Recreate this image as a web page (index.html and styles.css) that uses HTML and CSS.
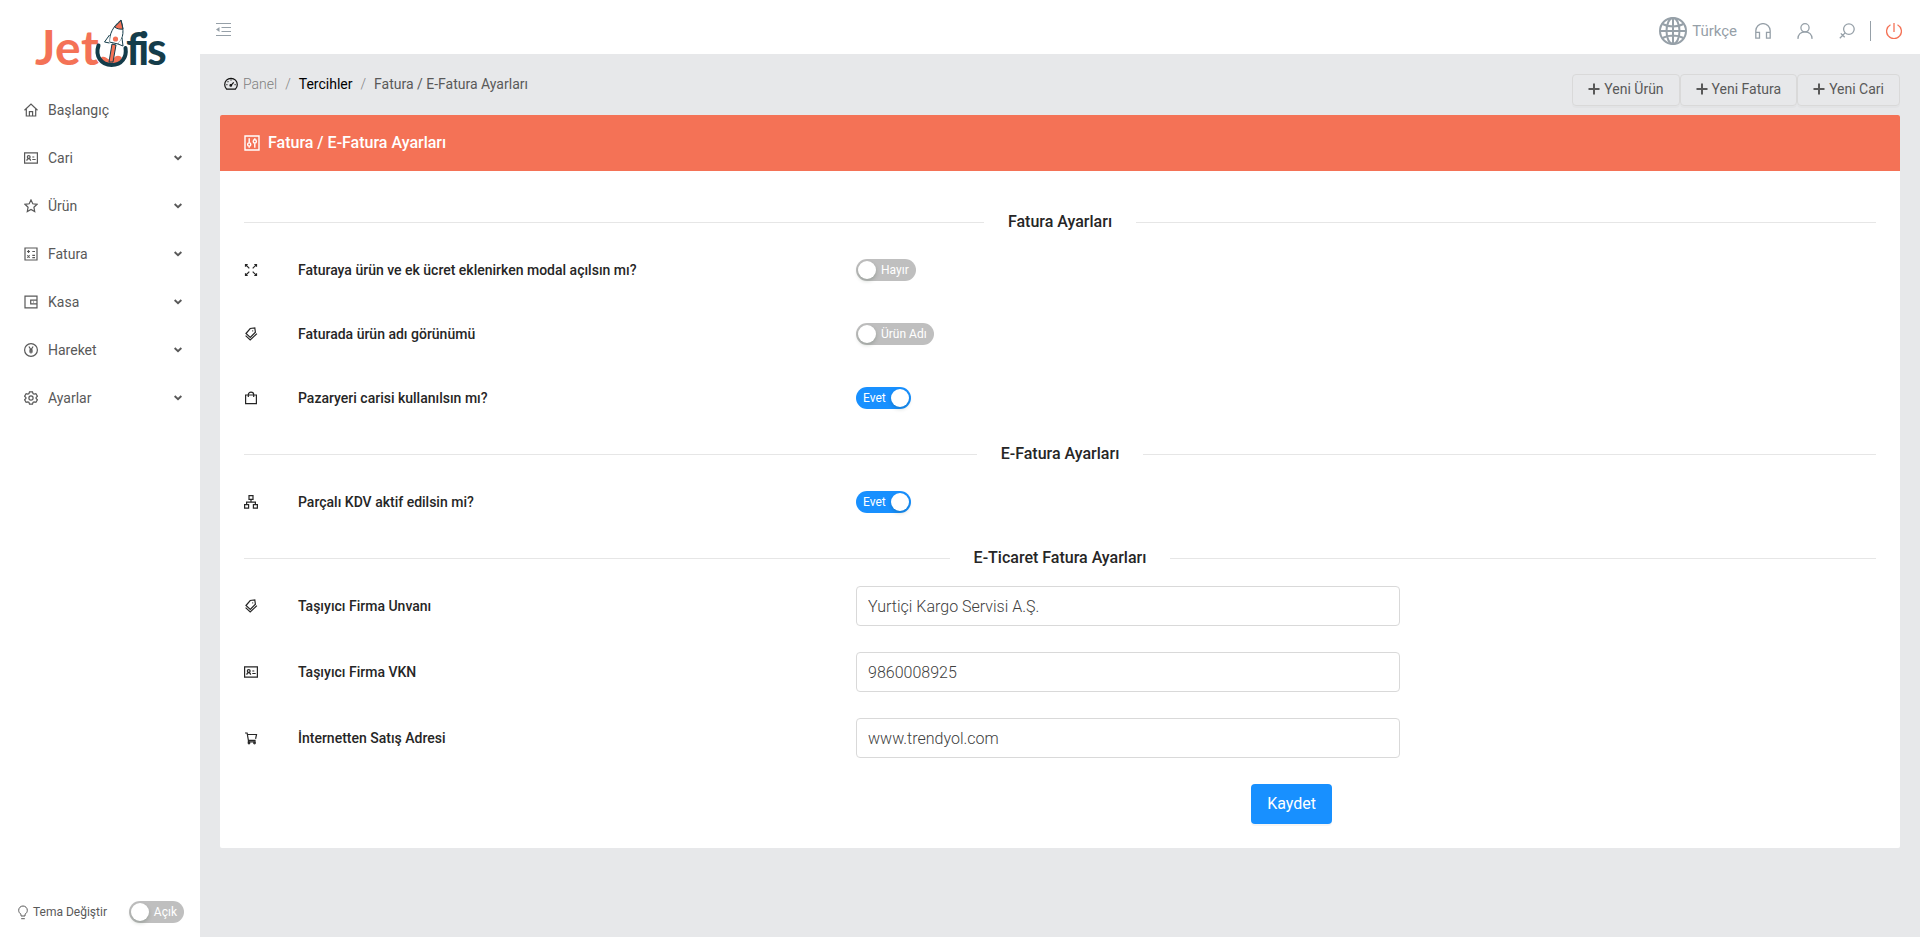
FILE: index.html
```html
<!DOCTYPE html>
<html lang="tr">
<head>
<meta charset="utf-8">
<title>Fatura / E-Fatura Ayarları</title>
<link rel="stylesheet" href="styles.css">
</head>
<body>
<svg class="sprite" aria-hidden="true">
  <symbol id="i-tags" viewBox="0 0 14 14"><path d="M2 6.500 6.200 1.500 10.800 1 11.400 5.200 6.300 10.400z"/><path d="M1.600 8.600 6.200 13 12.900 6.600M8.300 3.800h.9"/></symbol>
  <symbol id="i-card" viewBox="0 0 14 14"><path d="M.6 1.9h12.8v10.2H.6zM2.8 9.8c.1-1.5.8-2.2 1.9-2.2s1.8.7 1.9 2.2M8.300 6h2M8.300 8.500h3.400"/><circle cx="4.7" cy="6" r="1.4"/></symbol>
  <symbol id="i-down" viewBox="0 0 8 6"><path d="M.6 1 4 4.2 7.400 1"/></symbol>
  <symbol id="i-plus" viewBox="0 0 12 12"><path d="M6 .5v11M.5 6h11"/></symbol>
</svg>
<div class="app">
  <aside class="sidebar">
    <a class="logo" href="#" aria-label="Jetofis">
      <svg viewBox="0 -10 140 76" width="140" height="76">
        <g class="logo-text">
          <text class="logo-jet" font-size="48" x="0 20 46" y="47">Jet</text>
          <text class="logo-fis" font-size="45" x="91 103 112" y="47">fis</text>
        </g>
        <path class="logo-fire" d="M65 41c2-4 6-2 8 0l3 1 1 2 2-4c2-3 6-3 8 0l-3 5-7 2-7-2z"/>
        <path class="logo-ring" d="M63.500 27.500C60 38 66 47 76.500 47S92 39 90.500 30"/>
        <path class="logo-flame" d="m77 26 4 1-3 17h-4z"/>
        <path class="logo-body" d="M74.500 24c0-8 3-15 11.500-22 3 10 3 18-3 24z"/>
        <path class="logo-body" d="m74.500 17-5 7 5 1M87 20l1 8-5-2"/>
        <path class="logo-nose" d="M79.500 9 86 2.500l2 8.500c-2.500.5-6 0-8.500-2z"/>
        <circle class="logo-window" cx="80.500" cy="21" r="2.600"/>
      </svg>
    </a>
    <nav class="menu">
      <a class="menu-item" href="#"><svg class="icon" viewBox="0 0 14 14"><path d="M.5 7.200 7 1.100l6.500 6.100M2.300 6v7h9.400V6M5.400 13V8.600h3.200V13"/></svg><span>Başlangıç</span></a>
      <a class="menu-item" href="#"><svg class="icon"><use href="#i-card"/></svg><span>Cari</span><svg class="chevron"><use href="#i-down"/></svg></a>
      <a class="menu-item" href="#"><svg class="icon" viewBox="0 0 14 14"><path d="m7 .9 1.800 3.900 4.200.5-3.100 2.900.8 4.300L7 10.400l-3.700 2.100.8-4.300L1 5.300l4.200-.5z"/></svg><span>Ürün</span><svg class="chevron"><use href="#i-down"/></svg></a>
      <a class="menu-item" href="#"><svg class="icon" viewBox="0 0 14 14"><path d="M1 1h12v12H1zM3 4.500h3M4.500 3v3M8.300 4.500H11M3.300 8.300l2.400 2.400M5.700 8.300l-2.400 2.400M8.300 8.400H11M8.300 10.600H11"/></svg><span>Fatura</span><svg class="chevron"><use href="#i-down"/></svg></a>
      <a class="menu-item" href="#"><svg class="icon" viewBox="0 0 14 14"><path d="M13 5.200V1.100H1v11.800h12V8.800M13 5.200H6.700v3.600H13zM9 7h.9"/></svg><span>Kasa</span><svg class="chevron"><use href="#i-down"/></svg></a>
      <a class="menu-item" href="#"><svg class="icon" viewBox="0 0 14 14"><circle cx="7" cy="7" r="6.400"/><path d="m4.900 3.500 2.100 3.300 2.100-3.300M7 6.800v3.700M5.200 7.100h3.600M5.200 8.800h3.600"/></svg><span>Hareket</span><svg class="chevron"><use href="#i-down"/></svg></a>
      <a class="menu-item" href="#"><svg class="icon" viewBox="0 0 14 14"><path d="M5.500.8h3l.5 1.700 1.100.7 1.800-.5 1.500 2.500L12.100 6.500v1l1.300 1.300-1.500 2.500-1.800-.5-1.100.7-.5 1.700h-3L5 11.500l-1.100-.7-1.800.5L.6 8.800l1.300-1.300v-1L.6 5.200l1.500-2.500 1.800.5L5 2.500z"/><circle cx="7" cy="7" r="2.100"/></svg><span>Ayarlar</span><svg class="chevron"><use href="#i-down"/></svg></a>
    </nav>
    <div class="theme">
      <svg class="bulb" viewBox="0 0 10 15"><path d="M3 10.500V9.300C1.600 8.400.7 7 .7 5.300a4.300 4.300 0 0 1 8.600 0c0 1.700-.9 3.100-2.300 4v1.700H3zM3.200 13.700h3.600"/></svg>
      <span id="theme-label">Tema Değiştir</span>
      <button class="switch" type="button" role="switch" aria-checked="false" aria-labelledby="theme-label"><span class="switch-text">Açık</span></button>
    </div>
  </aside>

  <div class="page">
    <header class="topbar">
      <button class="icon-button fold" type="button" aria-label="Menüyü daralt"><svg viewBox="0 0 15 15" width="15" height="15"><path d="M0 1.500h15M5.500 5.500H15M5.500 9.500H15M0 13.500h15"/><path class="solid" d="M0 7.500 3.500 5v5z"/></svg></button>
      <div class="tools">
        <button class="icon-button language" type="button"><svg viewBox="0 0 28 28" width="28" height="28"><circle cx="14" cy="14" r="13"/><ellipse cx="14" cy="14" rx="6.500" ry="13"/><path d="M14 1v26M1 14h26M3.500 7c6 3.300 15 3.300 21 0M3.500 21c6-3.300 15-3.300 21 0"/></svg><span>Türkçe</span></button>
        <button class="icon-button" type="button" aria-label="Destek"><svg viewBox="0 0 16 16" width="16" height="16"><path d="M.8 15V7.800a7.200 7.200 0 0 1 14.400 0V15M.8 9.400h3.700v5.800H.8zM11.500 9.400h3.700v5.800h-3.700z"/></svg></button>
        <button class="icon-button" type="button" aria-label="Profil"><svg viewBox="0 0 16 16" width="16" height="16"><circle cx="8" cy="4.800" r="4.100"/><path d="M.9 15.900C1.200 11.500 4 8.900 8 8.900s6.800 2.600 7.100 7"/></svg></button>
        <button class="icon-button" type="button" aria-label="Şifre"><svg viewBox="0 0 16 16" width="16" height="16"><circle cx="9.900" cy="6.100" r="5.300"/><path d="M6.100 9.900.8 15.200M3.700 12.300l2 2M1.800 10.400l2.600 2.600"/></svg></button>
        <span class="separator"></span>
        <button class="icon-button power" type="button" aria-label="Çıkış"><svg viewBox="0 0 16 16" width="16" height="16"><path d="M4.500 1.700a7.400 7.400 0 1 0 7 0M8 0v9"/></svg></button>
      </div>
    </header>

    <main class="content">
      <div class="toolbar">
        <nav class="breadcrumb" aria-label="Konum">
          <a class="crumb-home" href="#"><svg class="icon" viewBox="0 0 14 14"><path d="M2.700 12.200a6.300 6.300 0 1 1 8.600 0zM7 8.300l2.700-3M7 2.600v1M2.400 7.700h1M10.600 7.700h1M3.600 4.300l.8.8"/><circle cx="6.800" cy="8.400" r=".8"/></svg><span>Panel</span></a>
          <span class="slash">/</span>
          <a class="crumb-link" href="#">Tercihler</a>
          <span class="slash">/</span>
          <span class="crumb-current">Fatura / E-Fatura Ayarları</span>
        </nav>
        <div class="actions">
          <button class="button" type="button"><svg class="plus"><use href="#i-plus"/></svg>Yeni Ürün</button>
          <button class="button" type="button"><svg class="plus"><use href="#i-plus"/></svg>Yeni Fatura</button>
          <button class="button" type="button"><svg class="plus"><use href="#i-plus"/></svg>Yeni Cari</button>
        </div>
      </div>

      <section class="card">
        <h1 class="card-head"><svg viewBox="0 0 16 16" width="16" height="16"><path d="M1 1h14v14H1zM5.200 3.200v4.600M5.200 11.200v1.600M10.800 3.200v1.600M10.800 8.200v4.600"/><circle cx="5.200" cy="9.500" r="1.600"/><circle cx="10.800" cy="6.400" r="1.600"/></svg><span>Fatura / E-Fatura Ayarları</span></h1>
        <form class="card-body">
          <h2 class="divider">Fatura Ayarları</h2>
          <div class="row">
            <div class="label"><svg class="icon" viewBox="0 0 14 14"><path d="M1.500 3.700V1.500h2.200M1.500 1.500l3.800 3.800M10.300 1.500h2.200v2.200M12.500 1.500 8.700 5.300M1.500 10.300v2.200h2.200M1.500 12.500l3.800-3.800M10.300 12.500h2.200v-2.200M12.500 12.500 8.700 8.700"/></svg><span id="l1">Faturaya ürün ve ek ücret eklenirken modal açılsın mı?</span></div>
            <div><button class="switch" type="button" role="switch" aria-checked="false" aria-labelledby="l1"><span class="switch-text">Hayır</span></button></div>
          </div>
          <div class="row">
            <div class="label"><svg class="icon"><use href="#i-tags"/></svg><span id="l2">Faturada ürün adı görünümü</span></div>
            <div><button class="switch" type="button" role="switch" aria-checked="false" aria-labelledby="l2"><span class="switch-text">Ürün Adı</span></button></div>
          </div>
          <div class="row">
            <div class="label"><svg class="icon" viewBox="0 0 14 14"><path d="M1.600 4h10.800v8.700H1.600zM4.300 6V3.800a2.700 2.700 0 0 1 5.400 0V6"/></svg><span id="l3">Pazaryeri carisi kullanılsın mı?</span></div>
            <div><button class="switch" type="button" role="switch" aria-checked="true" aria-labelledby="l3"><span class="switch-text">Evet</span></button></div>
          </div>
          <h2 class="divider">E-Fatura Ayarları</h2>
          <div class="row">
            <div class="label"><svg class="icon" viewBox="0 0 14 14"><path d="M5 .7h4v3.600H5zM.6 9.600h4v3.600h-4zM9.400 9.600h4v3.600h-4zM7 4.300v2.800M2.600 9.600V7.100h8.800v2.500"/></svg><span id="l4">Parçalı KDV aktif edilsin mi?</span></div>
            <div><button class="switch" type="button" role="switch" aria-checked="true" aria-labelledby="l4"><span class="switch-text">Evet</span></button></div>
          </div>
          <h2 class="divider">E-Ticaret Fatura Ayarları</h2>
          <div class="row field">
            <label class="label" for="carrier"><svg class="icon"><use href="#i-tags"/></svg><span>Taşıyıcı Firma Unvanı</span></label>
            <input class="input" id="carrier" type="text" value="Yurtiçi Kargo Servisi A.Ş.">
          </div>
          <div class="row field">
            <label class="label" for="vkn"><svg class="icon"><use href="#i-card"/></svg><span>Taşıyıcı Firma VKN</span></label>
            <input class="input" id="vkn" type="text" value="9860008925">
          </div>
          <div class="row field">
            <label class="label" for="site"><svg class="icon" viewBox="0 0 14 14"><path d="M1 2h2.100l1.300 7.400h7.200M3.400 3.500h9.100l-.9 4.400M4.400 9.400v1.400h7.300"/><circle cx="5" cy="12" r=".8"/><circle cx="10.500" cy="12" r=".8"/></svg><span>İnternetten Satış Adresi</span></label>
            <input class="input" id="site" type="text" value="www.trendyol.com">
          </div>
          <div class="row submit">
            <button class="save" type="submit">Kaydet</button>
          </div>
        </form>
      </section>
    </main>
  </div>
</div>
</body>
</html>
```
FILE: styles.css
```css
*,
*::before,
*::after {
  box-sizing: border-box;
}

body {
  margin: 0;
  font: 300 14px/22px Roboto, "Liberation Sans", sans-serif;
  color: #262626;
  background: #e7e8ea;
}

a {
  color: inherit;
  text-decoration: none;
}

button,
input {
  font: inherit;
  margin: 0;
}

button {
  cursor: pointer;
}

svg {
  display: block;
  flex: none;
  fill: none;
  stroke: currentColor;
}

.sprite {
  position: absolute;
  width: 0;
  height: 0;
}

.icon {
  width: 14px;
  height: 14px;
  stroke-width: 1.2;
}

.app {
  display: grid;
  grid-template-columns: 200px 1fr;
  min-height: 100vh;
}

/* Sidebar */
.sidebar {
  display: flex;
  flex-direction: column;
  background: #fff;
  color: #595959;
}

.logo {
  padding: 8px 25px 6px 35px;
}

.logo svg {
  stroke: none;
}

.logo-text {
  font-family: Lato, sans-serif;
  font-weight: 700;
}

.logo-jet,
.logo-fire,
.logo-nose,
.logo-window,
.logo-flame {
  fill: #f47256;
}

.logo-fis {
  fill: #143c4a;
}

.logo-ring {
  stroke: #143c4a;
  stroke-width: 4;
  stroke-linecap: round;
}

.logo-body {
  fill: #fff;
  stroke: #143c4a;
}

.logo-flame,
.logo-nose {
  stroke: #143c4a;
}

.menu {
  display: flex;
  flex-direction: column;
  gap: 8px;
}

.menu-item {
  display: flex;
  align-items: center;
  gap: 10px;
  height: 40px;
  padding: 0 18px 0 24px;
  font-weight: 400;
}

.chevron {
  width: 8px;
  height: 6px;
  margin-left: auto;
  stroke-width: 2;
}

.theme {
  display: flex;
  align-items: center;
  gap: 5px;
  margin-top: auto;
  padding: 0 16px 14px 18px;
  font-size: 12px;
  font-weight: 400;
}

.theme .switch {
  margin-left: auto;
}

.bulb {
  width: 10px;
  height: 15px;
}

/* Top bar */
.topbar {
  display: flex;
  align-items: center;
  justify-content: space-between;
  height: 54px;
  padding: 4px 18px 0 16px;
  background: #fff;
  color: #96a0a8;
}

.icon-button {
  display: flex;
  align-items: center;
  padding: 0;
  border: 0;
  background: none;
  color: inherit;
}

.solid {
  fill: currentColor;
  stroke: none;
}

.tools {
  display: flex;
  align-items: center;
  padding-top: 4px;
  stroke-width: 1.3;
}

.tools .icon-button {
  margin-left: 26px;
}

.tools .icon-button + .icon-button:nth-child(2) {
  margin-left: 18px;
}

.language {
  gap: 5px;
  font-size: 15px;
  font-weight: 400;
}

.language svg {
  stroke-width: 2;
}

.separator {
  width: 1px;
  height: 20px;
  margin-left: 15px;
  background: #96a0a8;
}

.tools .power {
  margin-left: 15px;
  color: #f47256;
}

/* Content */
.content {
  padding: 20px 20px 24px;
}

.toolbar {
  display: flex;
  align-items: flex-start;
  justify-content: space-between;
  padding: 0 0 9px 4px;
}

.breadcrumb {
  display: flex;
  align-items: center;
  line-height: 20px;
}

.crumb-home {
  display: flex;
  align-items: center;
  gap: 5px;
  color: #808080;
}

.crumb-home svg {
  color: #111;
}

.slash {
  margin: 0 8px;
  color: #808080;
}

.crumb-link {
  color: #000;
  font-weight: 400;
}

.crumb-current {
  color: #595959;
  font-weight: 400;
}

.actions {
  display: flex;
}

.button {
  display: flex;
  align-items: center;
  gap: 4px;
  height: 32px;
  padding: 0 15px 2px;
  border: 1px solid #d9d9d9;
  border-radius: 4px;
  background: transparent;
  box-shadow: 0 2px 0 rgba(0, 0, 0, 0.02);
  color: #595959;
  font-weight: 400;
}

.plus {
  width: 12px;
  height: 12px;
  stroke-width: 2;
}

.card {
  background: #fff;
  border-radius: 2px;
}

.card-head {
  display: flex;
  align-items: center;
  gap: 8px;
  height: 56px;
  margin: 0;
  padding: 0 24px;
  border-radius: 2px 2px 0 0;
  background: #f47256;
  color: #fff;
  font-size: 16px;
  font-weight: 500;
  stroke-width: 1.4;
}

.card-body {
  padding: 39px 24px 24px;
}

.divider {
  display: flex;
  align-items: center;
  gap: 24px;
  margin: 0 0 16px;
  font-size: 16px;
  line-height: 24px;
  font-weight: 500;
}

.divider::before,
.divider::after {
  content: "";
  flex: 1;
  height: 1px;
  background: #e6e6e6;
}

.row {
  display: grid;
  grid-template-columns: 9fr 8fr 7fr;
  align-items: center;
  height: 40px;
  margin-bottom: 24px;
}

.field {
  margin-bottom: 26px;
}

.label {
  display: grid;
  grid-template-columns: 54px 1fr;
  align-items: center;
  font-weight: 500;
}

.input {
  width: 100%;
  height: 40px;
  padding: 6px 11px;
  border: 1px solid #d9d9d9;
  border-radius: 4px;
  background: #fff;
  color: #404040;
  font-size: 16px;
}

.submit {
  margin-bottom: 0;
}

.save {
  grid-column: 2;
  justify-self: end;
  height: 40px;
  margin-right: 68px;
  padding: 0 16px;
  border: 0;
  border-radius: 4px;
  background: #1890ff;
  box-shadow: 0 2px 0 rgba(0, 0, 0, 0.04);
  color: #fff;
  font-size: 16px;
  font-weight: 400;
}

/* Switch */
.switch {
  display: flex;
  align-items: center;
  gap: 5px;
  height: 22px;
  padding: 0 7px 0 2px;
  border: 0;
  border-radius: 11px;
  background: #bfbfbf;
  color: #fff;
  font-size: 12px;
  font-weight: 400;
}

.switch::before {
  content: "";
  width: 18px;
  height: 18px;
  border-radius: 9px;
  background: #fff;
  box-shadow: 0 2px 4px rgba(0, 35, 11, 0.2);
}

.switch[aria-checked="true"] {
  flex-direction: row-reverse;
  padding: 0 2px 0 7px;
  background: #1890ff;
}
```
